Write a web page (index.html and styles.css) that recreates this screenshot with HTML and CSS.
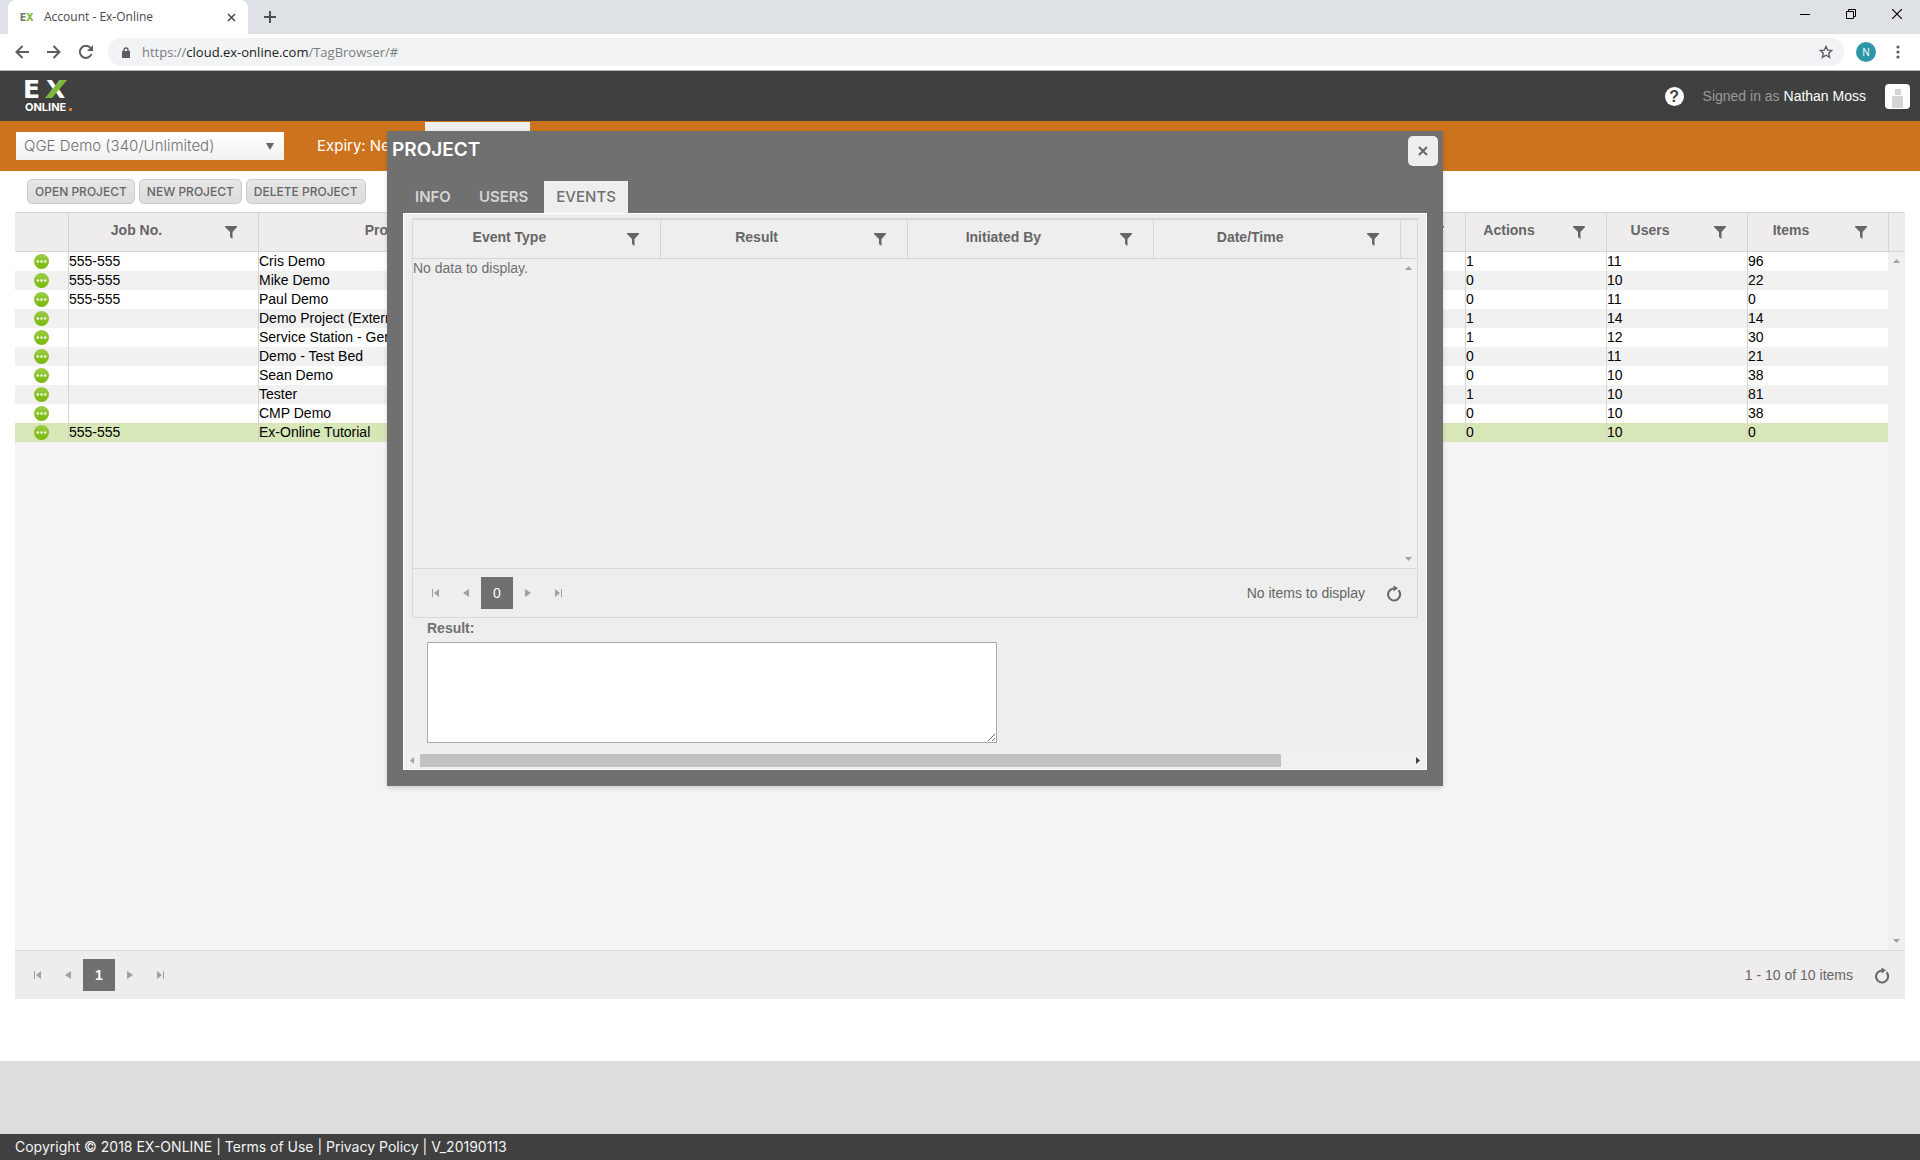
FILE: index.html
```html
<!DOCTYPE html>
<html lang="en">
<head>
<meta charset="utf-8">
<title>Account - Ex-Online</title>
<link rel="stylesheet" href="styles.css">
</head>
<body>
<svg class="defs" aria-hidden="true">
  <symbol id="filter" viewBox="0 0 12 13"><path d="M0 0h12v1L7.500 6v7L5 11V6L0 1z" fill="#666"/></symbol>
  <symbol id="first" viewBox="0 0 8 8"><path d="M0 0h1v8H0zM7 0v8L2 4z" fill="#a0a0a0"/></symbol>
  <symbol id="prev" viewBox="0 0 8 8"><path d="M7 0v8L1 4z" fill="#a0a0a0"/></symbol>
  <symbol id="next" viewBox="0 0 8 8"><path d="M1 0v8l6-4z" fill="#a0a0a0"/></symbol>
  <symbol id="last" viewBox="0 0 8 8"><path d="M7 0h1v8H7zM1 0v8l5-4z" fill="#a0a0a0"/></symbol>
  <symbol id="refresh" viewBox="0 0 16 17"><path d="M12.400 5.300A6 6 0 1 1 7.600 3.500" fill="none" stroke="#666" stroke-width="2"/><path d="M7.500 0.500L12 3.200 7.500 6.500z" fill="#666"/></symbol>
  <linearGradient id="green" x1="0" y1="0" x2="0" y2="1"><stop offset="0" stop-color="#9ccb4a"/><stop offset="1" stop-color="#78b80a"/></linearGradient>
  <symbol id="more" viewBox="0 0 15 15"><circle cx="7.500" cy="7.500" r="7.500" fill="url(#green)"/><g fill="#f3f9e6"><circle cx="3.800" cy="7.500" r="1.300"/><circle cx="7.500" cy="7.500" r="1.300"/><circle cx="11.200" cy="7.500" r="1.300"/></g></symbol>
</svg>

<div class="tabstrip">
  <div class="browser-tab">
    <span class="favicon">E<span class="favicon-x">X</span></span>
    <span class="tab-title">Account - Ex-Online</span>
    <button class="plain" aria-label="Close tab"><svg width="9" height="9"><path d="M1 1l7 7M8 1l-7 7" stroke="#4b4e52" stroke-width="1.600"/></svg></button>
  </div>
  <button class="plain new-tab" aria-label="New tab"><svg width="12" height="12"><path d="M6 0v12M0 6h12" stroke="#4b4e52" stroke-width="2"/></svg></button>
  <div class="window-controls">
    <button class="plain" aria-label="Minimise"><svg width="10" height="10"><path d="M0 5.500h10" stroke="#000"/></svg></button>
    <button class="plain" aria-label="Restore"><svg width="10" height="10"><path d="M.5 2.500h7v7h-7zM2.500 2.500v-2h7v7h-2" fill="none" stroke="#000"/></svg></button>
    <button class="plain" aria-label="Close"><svg width="10" height="10"><path d="M0 0l10 10M10 0L0 10" stroke="#000" stroke-width="1.200"/></svg></button>
  </div>
</div>

<div class="toolbar">
  <button class="plain" aria-label="Back"><svg width="14" height="14"><path d="M14 7H1.500M7.500 1l-6 6 6 6" fill="none" stroke="#5a5d61" stroke-width="2"/></svg></button>
  <button class="plain" aria-label="Forward"><svg width="14" height="14"><path d="M0 7h12.500M6.500 1l6 6-6 6" fill="none" stroke="#5a5d61" stroke-width="2"/></svg></button>
  <button class="plain" aria-label="Reload"><svg width="14" height="14"><path d="M12.500 9A6 6 0 1 1 11.400 2.900" fill="none" stroke="#5a5d61" stroke-width="2"/><path d="M14 0v6H8z" fill="#5a5d61"/></svg></button>
  <div class="address">
    <svg width="8" height="11"><path d="M2 5V3a2 2 0 0 1 4 0v2" fill="none" stroke="#5a5d61" stroke-width="1.400"/><path d="M0 4h8v7H0z" fill="#5a5d61"/></svg>
    <span class="url">https://<b>cloud.ex-online.com</b>/TagBrowser/#</span>
    <svg width="14" height="14" viewBox="0 0 14 14"><path d="M7 1.500l1.700 3.700 4 .4-3 2.700.9 4L7 10.200l-3.600 2.100.9-4-3-2.700 4-.4z" fill="none" stroke="#5a5d61" stroke-width="1.400"/></svg>
  </div>
  <span class="profile">N</span>
  <button class="plain menu" aria-label="Menu"><svg width="4" height="14" fill="#5a5d61"><circle cx="2" cy="2" r="1.600"/><circle cx="2" cy="7" r="1.600"/><circle cx="2" cy="12" r="1.600"/></svg></button>
</div>

<header class="app-header">
  <a class="logo" href="#" aria-label="Ex Online">
    <svg width="48" height="32"><text class="logo-mark" x="-2" y="18">E</text><text class="logo-mark" x="21" y="18">X</text><path d="M35 0h7L27 18h-7z" fill="#80b93a"/><text class="logo-name" x="0" y="31">ONLINE</text><path d="M44 28h3v3h-3z" fill="#e07a1c"/></svg>
  </a>
  <div class="account">
    <a href="#" class="help" aria-label="Help">?</a>
    <span class="signed">Signed in as <a href="#">Nathan Moss</a></span>
    <svg class="avatar" width="25" height="25"><rect width="25" height="25" rx="4" fill="#fff"/><path d="M10 5h6v6h-6zM7 12h11v12H7z" fill="#d4d4d4"/></svg>
  </div>
</header>

<nav class="orange-bar">
  <div class="picker">
    <select aria-label="Account"><option>QGE Demo (340/Unlimited)</option></select>
    <svg class="picker-arrow" width="8" height="7"><path d="M0 0h8L4 7z" fill="#666"/></svg>
  </div>
  <span class="expiry">Expiry: Never</span>
  <a class="nav-active" href="#" aria-label="Projects"></a>
</nav>

<main>
  <div class="actions">
    <button class="action">OPEN PROJECT</button>
    <button class="action">NEW PROJECT</button>
    <button class="action">DELETE PROJECT</button>
  </div>
  <section class="grid projects">
    <div class="grid-main">
      <div class="grid-view">
      <table>
        <colgroup><col class="c-icon"><col class="c-job"><col class="c-name"><col><col class="c-num"><col class="c-num"><col class="c-num"></colgroup>
        <thead><tr>
          <th></th>
          <th><span>Job No.</span><svg class="filter"><use href="#filter"/></svg></th>
          <th><span>Project Name</span><svg class="filter"><use href="#filter"/></svg></th>
          <th><svg class="filter"><use href="#filter"/></svg></th>
          <th><span>Actions</span><svg class="filter"><use href="#filter"/></svg></th>
          <th><span>Users</span><svg class="filter"><use href="#filter"/></svg></th>
          <th><span>Items</span><svg class="filter"><use href="#filter"/></svg></th>
        </tr></thead>
        <tbody>
          <tr><td><svg class="more"><use href="#more"/></svg></td><td>555-555</td><td>Cris Demo</td><td></td><td>1</td><td>11</td><td>96</td></tr>
          <tr><td><svg class="more"><use href="#more"/></svg></td><td>555-555</td><td>Mike Demo</td><td></td><td>0</td><td>10</td><td>22</td></tr>
          <tr><td><svg class="more"><use href="#more"/></svg></td><td>555-555</td><td>Paul Demo</td><td></td><td>0</td><td>11</td><td>0</td></tr>
          <tr><td><svg class="more"><use href="#more"/></svg></td><td></td><td>Demo Project (External)</td><td></td><td>1</td><td>14</td><td>14</td></tr>
          <tr><td><svg class="more"><use href="#more"/></svg></td><td></td><td>Service Station - General</td><td></td><td>1</td><td>12</td><td>30</td></tr>
          <tr><td><svg class="more"><use href="#more"/></svg></td><td></td><td>Demo - Test Bed</td><td></td><td>0</td><td>11</td><td>21</td></tr>
          <tr><td><svg class="more"><use href="#more"/></svg></td><td></td><td>Sean Demo</td><td></td><td>0</td><td>10</td><td>38</td></tr>
          <tr><td><svg class="more"><use href="#more"/></svg></td><td></td><td>Tester</td><td></td><td>1</td><td>10</td><td>81</td></tr>
          <tr><td><svg class="more"><use href="#more"/></svg></td><td></td><td>CMP Demo</td><td></td><td>0</td><td>10</td><td>38</td></tr>
          <tr class="selected"><td><svg class="more"><use href="#more"/></svg></td><td>555-555</td><td>Ex-Online Tutorial</td><td></td><td>0</td><td>10</td><td>0</td></tr>
        </tbody>
      </table>
      </div>
      <div class="side">
        <div class="side-cap"></div>
        <div class="vscroll"><svg width="7" height="4"><path d="M0 4h7L3.500 0z" fill="#a0a0a0"/></svg><svg width="7" height="4"><path d="M0 0h7L3.500 4z" fill="#a0a0a0"/></svg></div>
      </div>
    </div>
    <div class="pager">
      <button class="plain page-arrow" aria-label="First page"><svg><use href="#first"/></svg></button>
      <button class="plain page-arrow" aria-label="Previous page"><svg><use href="#prev"/></svg></button>
      <button class="page-number bold">1</button>
      <button class="plain page-arrow" aria-label="Next page"><svg><use href="#next"/></svg></button>
      <button class="plain page-arrow" aria-label="Last page"><svg><use href="#last"/></svg></button>
      <span class="page-info">1 - 10 of 10 items</span>
      <button class="plain refresh" aria-label="Refresh"><svg width="16" height="17"><use href="#refresh"/></svg></button>
    </div>
  </section>
</main>

<div class="band"></div>
<footer>Copyright © 2018 EX-ONLINE | <a href="#">Terms of Use</a> | <a href="#">Privacy Policy</a> | V_20190113</footer>

<div class="dialog" role="dialog" aria-labelledby="dialog-title">
  <div class="dialog-head">
    <h1 id="dialog-title">PROJECT</h1>
    <button class="dialog-close" aria-label="Close dialog"><svg width="10" height="10"><path d="M1 1l8 8M9 1L1 9" stroke="#666" stroke-width="2"/></svg></button>
  </div>
  <div class="tabs" role="tablist">
    <button class="tab" role="tab">INFO</button>
    <button class="tab" role="tab">USERS</button>
    <button class="tab active" role="tab" aria-selected="true">EVENTS</button>
  </div>
  <div class="panel">
    <div class="panel-body">
      <section class="grid events">
        <div class="grid-main">
          <div class="grid-view">
          <table>
            <thead><tr>
              <th><span>Event Type</span><svg class="filter"><use href="#filter"/></svg></th>
              <th><span>Result</span><svg class="filter"><use href="#filter"/></svg></th>
              <th><span>Initiated By</span><svg class="filter"><use href="#filter"/></svg></th>
              <th><span>Date/Time</span><svg class="filter"><use href="#filter"/></svg></th>
            </tr></thead>
            <tbody><tr><td colspan="4">No data to display.</td></tr></tbody>
          </table>
          </div>
          <div class="side">
            <div class="side-cap"></div>
            <div class="vscroll"><svg width="7" height="4"><path d="M0 4h7L3.500 0z" fill="#a0a0a0"/></svg><svg width="7" height="4"><path d="M0 0h7L3.500 4z" fill="#a0a0a0"/></svg></div>
          </div>
        </div>
        <div class="pager">
          <button class="plain page-arrow" aria-label="First page"><svg><use href="#first"/></svg></button>
          <button class="plain page-arrow" aria-label="Previous page"><svg><use href="#prev"/></svg></button>
          <button class="page-number">0</button>
          <button class="plain page-arrow" aria-label="Next page"><svg><use href="#next"/></svg></button>
          <button class="plain page-arrow" aria-label="Last page"><svg><use href="#last"/></svg></button>
          <span class="page-info">No items to display</span>
          <button class="plain refresh" aria-label="Refresh"><svg width="16" height="17"><use href="#refresh"/></svg></button>
        </div>
      </section>
      <div class="field">
        <label for="result">Result:</label>
        <textarea id="result"></textarea>
      </div>
    </div>
    <div class="hscroll">
      <svg width="4" height="7"><path d="M4 0v7L0 3.500z" fill="#a0a0a0"/></svg>
      <div class="track"><div class="thumb"></div></div>
      <svg width="4" height="7"><path d="M0 0v7l4-3.500z" fill="#404040"/></svg>
    </div>
  </div>
</div>
</body>
</html>
```

FILE: styles.css
```css
* { box-sizing: border-box; }
body {
  margin: 0;
  min-height: 100vh;
  display: flex;
  flex-direction: column;
  position: relative;
  background: #fff;
  color: #000;
  font: 14px/19px "Liberation Sans", Arial, sans-serif;
}
.defs { position: absolute; width: 0; height: 0; }
svg { display: block; }
a { color: inherit; text-decoration: none; }
button, select, textarea { font: inherit; color: inherit; margin: 0; }
.plain {
  border: 0;
  padding: 0;
  background: none;
  display: flex;
  align-items: center;
  justify-content: center;
}

/* browser frame */
.tabstrip { height: 34px; display: flex; background: #dee1e6; padding-left: 8px; }
.browser-tab {
  width: 240px;
  display: flex;
  align-items: center;
  padding: 0 12px;
  background: #fff;
  border-radius: 8px 8px 0 0;
}
.favicon { width: 24px; font: 800 10px/16px Inter, sans-serif; color: #777; }
.favicon-x { color: #80b93a; }
.tab-title { flex: 1; font: 12px/16px "Open Sans", sans-serif; color: #45494d; }
.new-tab { margin-left: 16px; }
.window-controls { margin-left: auto; display: flex; height: 28px; }
.window-controls button { width: 46px; }
.toolbar {
  height: 37px;
  display: flex;
  align-items: center;
  gap: 18px;
  padding: 0 20px 0 15px;
  border-bottom: 1px solid #b4b6b5;
}
.address {
  flex: 1;
  height: 28px;
  display: flex;
  align-items: center;
  gap: 12px;
  margin-left: -3px;
  padding: 0 11px 0 14px;
  border-radius: 14px;
  background: #f1f3f4;
}
.url { flex: 1; font: 13px/20px "Open Sans", sans-serif; color: #7a7d81; }
.url b { font-weight: 400; color: #202124; }
.profile {
  width: 20px;
  height: 20px;
  margin: 0 2px 0 -6px;
  border-radius: 10px;
  background: #2f96a8;
  color: #fff;
  font: 10px/20px "Open Sans", sans-serif;
  text-align: center;
}

/* application header */
.app-header {
  height: 50px;
  display: flex;
  align-items: center;
  justify-content: space-between;
  padding: 0 10px 0 25px;
  background: #404040;
}
.logo svg { overflow: visible; }
.logo-mark { font: 700 25px "DejaVu Sans", sans-serif; fill: #fff; }
.logo-name { font: 700 11px Inter, sans-serif; fill: #fff; }
.account { display: flex; align-items: center; gap: 19px; color: #999; }
.account span a { color: #fff; }
.help {
  width: 19px;
  height: 19px;
  border-radius: 10px;
  background: #fff;
  color: #404040;
  font-weight: 700;
  font-size: 16px;
  text-align: center;
}
.orange-bar {
  height: 50px;
  display: flex;
  align-items: center;
  padding-left: 16px;
  background: #ce731d;
  font: 15px/20px Inter, sans-serif;
  color: #fff;
  position: relative;
}
.picker { position: relative; width: 268px; }
.picker select {
  display: block;
  width: 100%;
  height: 28px;
  padding: 0 8px;
  border: 0;
  border-radius: 0;
  appearance: none;
  background: linear-gradient(#fff, #f1f1f1);
  color: #707070;
  font-weight: 300;
}
.picker-arrow { position: absolute; right: 10px; top: 11px; }
.expiry { margin-left: 33px; }
.nav-active { position: absolute; left: 425px; top: 1px; width: 105px; height: 49px; background: #f1f0f1; }

/* projects */
main { flex: 1; display: flex; flex-direction: column; padding: 8px 15px 62px; }
.actions { display: flex; gap: 4px; padding: 0 12px 8px; }
.action {
  height: 25px;
  padding: 0 7px;
  border: 1px solid #ccc;
  border-radius: 5px;
  background: linear-gradient(#e6e6e6, #dcdcdc);
  color: #666;
  font: 500 12px/23px Inter, sans-serif;
}
.grid { display: flex; flex-direction: column; }
.projects { flex: 1; background: #f4f4f4; }
.grid-main { flex: 1; display: flex; border-top: 1px solid #d5d5d5; }
.grid-view { flex: 1; min-width: 0; }
table { width: 100%; table-layout: fixed; border-collapse: separate; border-spacing: 0; }
.c-icon { width: 53px; }
.c-job { width: 190px; }
.c-name { width: 356px; }
.c-num { width: 141px; }
th {
  height: 39px;
  padding: 0 54px 3px 0;
  border-bottom: 1px solid #d5d5d5;
  position: relative;
  color: #666;
  text-align: center;
}
th + th, td + td { border-left: 1px solid #d5d5d5; }
.filter { position: absolute; right: 21px; top: 13px; width: 12px; height: 13px; }
td { height: 19px; padding: 0; white-space: nowrap; overflow: hidden; }
.projects th, .projects .side-cap, .projects .pager { background: #eeeced; }
.projects tbody tr { background: #fff; }
.projects tbody tr:nth-child(even) { background: #f1f1f1; }
.projects tbody tr.selected { background: #d7e7b8; }
.more { width: 15px; height: 15px; margin: 0 auto; }
.side { width: 17px; display: flex; flex-direction: column; }
.side-cap { height: 39px; border-left: 1px solid #d5d5d5; border-bottom: 1px solid #d5d5d5; }
.vscroll {
  flex: 1;
  display: flex;
  flex-direction: column;
  justify-content: space-between;
  align-items: center;
  padding: 7px 0;
  background: #f0f0f0;
}
.pager {
  height: 49px;
  display: flex;
  align-items: center;
  padding: 0 15px 0 8px;
  border-top: 1px solid #dadada;
  color: #666;
}
.page-arrow { width: 30px; height: 32px; }
.page-arrow svg { width: 8px; height: 8px; }
.page-number { width: 32px; height: 32px; padding: 0; border: 0; background: #707070; color: #fff; }
.bold { font-weight: 700; }
.page-info { margin-left: auto; margin-right: 21px; }

.band { height: 73px; background: #ddd; }
footer { height: 26px; padding-left: 15px; background: #404040; color: #f4f4f4; font: 14px/26px Inter, sans-serif; }

/* project dialog */
.dialog {
  position: absolute;
  left: 387px;
  top: 131px;
  width: 1056px;
  padding: 0 16px 16px;
  background: #707070;
  box-shadow: 0 2px 5px rgba(0, 0, 0, .15);
}
.dialog-head { display: flex; justify-content: space-between; height: 50px; margin: 0 -11px; padding-top: 5px; }
.dialog h1 { margin: 0; font: 600 19px/28px Inter, sans-serif; color: #fff; }
.dialog-close {
  width: 30px;
  height: 30px;
  padding: 0;
  border: 0;
  border-radius: 5px;
  background: #eee;
  display: flex;
  align-items: center;
  justify-content: center;
}
.tabs { display: flex; gap: 4px; }
.tab { height: 32px; padding: 0 12px; border: 0; background: none; color: #d5d5d5; font: 600 15px/30px Inter, sans-serif; }
.tab.active { background: #eee; color: #707070; font-weight: 500; }
.panel { border: 1px solid #fff; background: #eee; color: #707070; }
.panel-body { padding: 4px 8px 9px; }
.events { height: 400px; border: 1px solid #d9d9d9; }
.field { padding: 0 15px; }
.field label { display: block; font-weight: 700; line-height: 20px; }
.field textarea { display: block; width: 570px; height: 101px; margin-top: 4px; border: 1px solid #a9a9a9; background: #fff; }
.hscroll { height: 17px; display: flex; align-items: center; justify-content: space-between; padding: 0 6px; background: #f0f0f0; }
.track { flex: 1; padding: 0 6px; }
.thumb { width: 87%; height: 13px; background: #c1c1c1; }
```
